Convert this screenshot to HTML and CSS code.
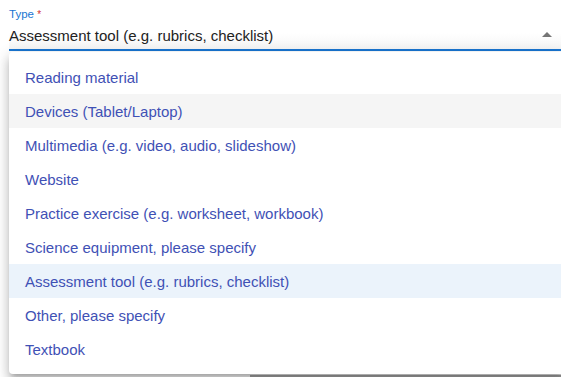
FILE: index.html
```html
<!DOCTYPE html>
<html lang="en">
    <head>
        <meta charset="UTF-8" />
        <meta name="viewport" content="width=device-width, initial-scale=1.0" />
        <title>Resource Type</title>
        <link rel="stylesheet" href="styles.css">
    </head>
    <body>
        <div class="form">
            <div class="field">
                <label class="field-label">Type <span class="required">*</span></label>
                <div class="field-input">
                    <span class="field-value">Assessment tool (e.g. rubrics, checklist)</span>
                    <span class="arrow"></span>
                </div>

                <ul class="menu">
                    <li class="menu-item">Reading material</li>
                    <li class="menu-item hover">Devices (Tablet/Laptop)</li>
                    <li class="menu-item">Multimedia (e.g. video, audio, slideshow)</li>
                    <li class="menu-item">Website</li>
                    <li class="menu-item">Practice exercise (e.g. worksheet, workbook)</li>
                    <li class="menu-item">Science equipment, please specify</li>
                    <li class="menu-item selected">Assessment tool (e.g. rubrics, checklist)</li>
                    <li class="menu-item">Other, please specify</li>
                    <li class="menu-item">Textbook</li>
                </ul>
            </div>

            <div class="row">
                <div class="row-left"></div>
                <div class="row-field"></div>
            </div>
        </div>
    </body>
</html>
```

FILE: styles.css
```css
body {
    margin: 0;
    font-family: "Liberation Sans", Arial, sans-serif;
    background-color: #fff;
    overflow: hidden;
}
.form {
    padding: 8px 0 0 9px;
}
.field {
    position: relative;
}
.field-label {
    display: block;
    font-size: 11.5px;
    color: #1976d2;
    line-height: 13px;
    height: 14px;
}
.required {
    color: #d32f2f;
    font-size: 10px;
    vertical-align: top;
}
.field-input {
    display: flex;
    align-items: center;
    justify-content: space-between;
    height: 27px;
    border-bottom: 2px solid #1976d2;
    background: linear-gradient(to bottom, #fff 40%, #f6f6f6);
}
.field-value {
    font-size: 15px;
    color: #222;
}
.arrow {
    width: 0;
    height: 0;
    border-left: 5px solid transparent;
    border-right: 5px solid transparent;
    border-bottom: 5px solid #757575;
    margin-right: 9px;
    margin-top: -2px;
}
.menu {
    position: absolute;
    top: 44px;
    left: 0;
    width: 556px;
    margin: 0;
    padding: 8px 0;
    list-style: none;
    background-color: #fff;
    border-radius: 4px;
    box-shadow: 0 5px 5px -3px rgba(0, 0, 0, 0.2), 0 8px 10px 1px rgba(0, 0, 0, 0.14), 0 3px 14px 2px rgba(0, 0, 0, 0.12);
    z-index: 2;
}
.menu-item {
    height: 34px;
    line-height: 35px;
    padding-left: 16px;
    font-size: 15px;
    color: #3f51b5;
}
.menu-item.hover {
    background-color: #f5f5f5;
}
.menu-item.selected {
    background-color: #ebf3fb;
}
.row {
    display: flex;
    margin-top: 324px;
}
.row-left {
    width: 241px;
}
.row-field {
    flex: 1;
    border-top: 2px solid #aaa;
}
```
